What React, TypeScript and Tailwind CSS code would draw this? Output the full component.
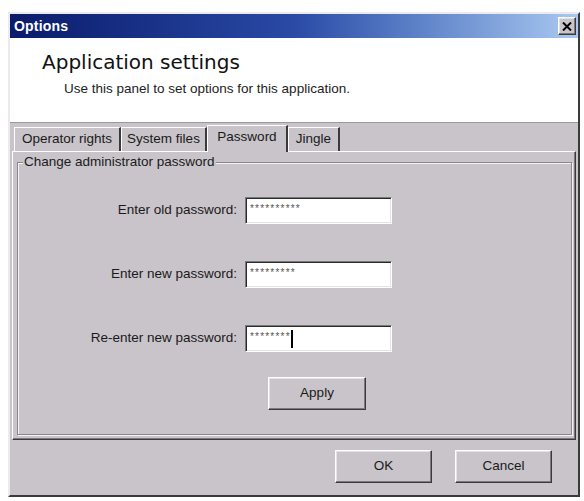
const ui = { fontFamily: '"Liberation Sans", Arial, sans-serif' };

const raised =
  "border border-t-white border-l-white border-r-[#3a3a3a] border-b-[#3a3a3a] shadow-[inset_-1px_-1px_0_#7c787d,inset_1px_1px_0_#e4e2e5]";

const PasswordRow = ({
  label,
  value,
  cursor,
}: {
  label: string;
  value: string;
  cursor?: boolean;
}) => (
  <div className="flex items-center">
    <div className="w-[227px] pr-[8px] text-right text-[13.5px] text-[#1a1a1a]">
      {label}
    </div>
    <div className="h-[27px] w-[147px] border border-t-[#7c787d] border-l-[#7c787d] border-r-white border-b-white bg-white shadow-[inset_1px_1px_0_#2a2a2a,inset_-1px_-1px_0_#e4e2e5]">
      <div className="flex items-start pl-[4px] pt-[5px]">
        <span className="text-[10px] leading-[12px] tracking-[1.2px] text-[#555]">
          {value}
        </span>
        {cursor && <span className="mt-[-1px] h-[18px] w-[2px] bg-black" />}
      </div>
    </div>
  </div>
);

const Tab = ({
  label,
  width,
  active,
}: {
  label: string;
  width: string;
  active?: boolean;
}) => (
  <div
    className={`${width} flex items-center justify-center border-t border-l border-r-2 border-t-white border-l-white border-r-[#3a3a3a] text-[13.5px] text-[#1a1a1a] ${
      active
        ? "relative z-10 -mb-[1px] h-[27px] bg-[#c8c4c9] pb-[3px]"
        : "h-[24px] bg-[#c8c4c9]"
    }`}
  >
    {label}
  </div>
);

export default function App() {
  return (
    <div className="h-[501px] w-[584px] bg-white pl-[8px] pt-[12px]" style={ui}>
      <div className="flex h-[485px] w-[572px] flex-col border-2 border-t-[#eceaed] border-l-[#eceaed] border-r-[#3a3a3a] border-b-[#3a3a3a] bg-[#c8c4c9]">
        <div className="flex h-[24px] items-center justify-between bg-gradient-to-r from-[#0b1b6b] via-[#2a4aa6] to-[#a9c9f1] pl-[4px] pr-[2px]">
          <span className="text-[14px] font-bold tracking-[0.2px] text-white">Options</span>
          <div className={`flex h-[18px] w-[18px] items-center justify-center bg-[#c8c4c9] ${raised}`}>
            <svg width="10" height="9" viewBox="0 0 10 9">
              <path d="M1 0.5 L9 8.5 M9 0.5 L1 8.5" stroke="#000" strokeWidth="2" />
            </svg>
          </div>
        </div>

        <div className="h-[85px] border-b border-[#9c989d] bg-white">
          <div
            className="pl-[32px] pt-[12px] text-[20px] leading-[24px] text-[#111]"
            style={{ fontFamily: '"DejaVu Sans", Verdana, sans-serif' }}
          >
            Application settings
          </div>
          <div className="mt-[7px] pl-[54px] text-[13.5px] leading-[16px] text-[#222]">
            Use this panel to set options for this application.
          </div>
        </div>

        <div className="flex flex-1 flex-col px-[2px] pt-[2px]">
          <div className="flex items-end pl-[2px]">
            <Tab label="Operator rights" width="w-[107px]" />
            <Tab label="System files" width="w-[86px]" />
            <Tab label="Password" width="w-[81px]" active />
            <Tab label="Jingle" width="w-[52px]" />
          </div>

          <div className="h-[289px] w-[564px] border border-t-white border-l-white border-r-[#3a3a3a] border-b-[#3a3a3a] pb-[4px] pl-[4px] pr-[3px] pt-[10px] shadow-[inset_-1px_-1px_0_#7c787d]">
            <div className="relative h-full border border-[#8a868b] shadow-[1px_1px_0_#f4f2f5,inset_1px_1px_0_#f4f2f5]">
              <span className="absolute -top-[9px] left-[5px] bg-[#c8c4c9] px-[1px] text-[13.5px] leading-[16px] text-[#1a1a1a]">
                Change administrator password
              </span>
              <div className="flex flex-col gap-[37px] pt-[34px]">
                <PasswordRow label="Enter old password:" value="**********" />
                <PasswordRow label="Enter new password:" value="*********" />
                <PasswordRow label="Re-enter new password:" value="********" cursor />
              </div>
              <div className="mt-[25px] pl-[250px]">
                <button className={`h-[33px] w-[98px] bg-[#c8c4c9] text-[13.5px] text-[#1a1a1a] ${raised}`}>
                  Apply
                </button>
              </div>
            </div>
          </div>

          <div className="flex justify-end gap-[23px] pr-[24px] pt-[10px]">
            <button className={`h-[33px] w-[97px] bg-[#c8c4c9] text-[13.5px] text-[#1a1a1a] ${raised}`}>
              OK
            </button>
            <button className={`h-[33px] w-[97px] bg-[#c8c4c9] text-[13.5px] text-[#1a1a1a] ${raised}`}>
              Cancel
            </button>
          </div>
        </div>
      </div>
    </div>
  );
}
